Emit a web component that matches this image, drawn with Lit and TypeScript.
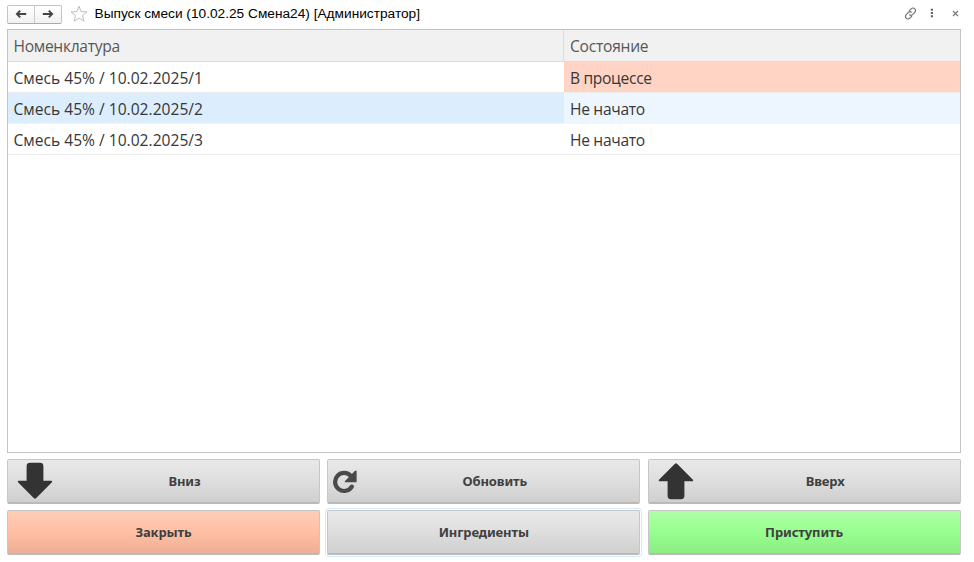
import { LitElement, html, css, svg, nothing } from "lit";
import { customElement, property } from "lit/decorators.js";
import { classMap } from "lit/directives/class-map.js";

const icons: Record<string, unknown> = {
  down: svg`<svg width="36" height="38" viewBox="0 0 36 38"><path fill="#333" d="M13 .8h10a3.4 3.4 0 0 1 3.4 3.4v14.6h8.1q1.4.3.4 1.5L19.3 36.1q-1.3 1.2-2.6 0L1 20.3q-.9-1.2.5-1.5h8.1V4.2A3.4 3.4 0 0 1 13 .8z"/></svg>`,
  up: svg`<svg width="36" height="38" viewBox="0 0 36 38"><path fill="#333" d="M13 37.2h10a3.4 3.4 0 0 0 3.4-3.4V19.2h8.1q1.4-.3.4-1.5L19.3 1.9q-1.3-1.2-2.6 0L1 17.7q-.9 1.2.5 1.5h8.1v14.6a3.4 3.4 0 0 0 3.4 3.4z"/></svg>`,
  refresh: svg`<svg width="24" height="24" viewBox="0 0 24 24"><path fill="none" stroke="#4a4a4a" stroke-width="4.2" stroke-linecap="round" d="M18.8 16.6A9 9 0 1 1 18 6.2"/><path fill="#4a4a4a" d="M23.6.8v11.4H11.8v-1L22 .8z"/></svg>`,
};

@customElement("form-button")
class FormButton extends LitElement {
  @property() label = "";
  @property() tone = "gray";
  @property() icon = "";
  @property({ type: Boolean }) focused = false;

  static styles = css`
    :host { display: block; min-width: 0; }
    button {
      display: flex; align-items: center; box-sizing: border-box;
      width: 100%; height: 45px; padding: 0; margin: 0;
      border: 1px solid #c6c6c6; border-bottom: 2px solid #bababa; border-radius: 2px;
      background: linear-gradient(#e9e9e9, #dedede 50%, #cfcfcf);
      color: #404040; font: bold 13px "Noto Sans", "Open Sans", sans-serif;
      letter-spacing: -.12px;
    }
    .salmon { background: linear-gradient(#ffcdb8, #ffbea3 55%, #ecae96); }
    .green { background: linear-gradient(#afffa7, #98ff8f 50%, #8bec83); }
    .focused { box-shadow: 0 0 0 1px #fff, 0 0 0 2px #d4eafa; }
    .label { flex: 1; text-align: center; }
    .icon { display: flex; flex: none; }
    .large { padding-left: 9px; margin-right: -3px; }
    .small { padding-left: 5px; margin-right: -7px; padding-top: 1px; }
    svg { display: block; }
  `;

  render() {
    const small = this.icon === "refresh";
    return html`<button class=${classMap({ [this.tone]: true, focused: this.focused })}>
      ${this.icon
        ? html`<span class=${classMap({ icon: true, small, large: !small })}>${icons[this.icon]}</span>`
        : nothing}
      <span class="label">${this.label}</span>
    </button>`;
  }
}

@customElement("app-root")
class AppRoot extends LitElement {
  static styles = css`
    :host {
      display: flex; flex-direction: column; box-sizing: border-box;
      width: 974px; height: 562px; padding: 0 13px 0 7px; background: #fff;
      font-family: "Open Sans", "Noto Sans", sans-serif; overflow: hidden;
    }
    svg { display: block; }
    .bar { display: flex; align-items: center; height: 29px; flex: none; }
    .nav {
      display: flex; box-sizing: border-box; width: 55px; height: 19px; margin-top: -1px;
      border: 1px solid #c4c4c4; border-bottom-color: #aaa; border-radius: 2px;
      background: linear-gradient(#fff, #f1f1f1);
    }
    .nav span { flex: 1; display: flex; align-items: center; justify-content: center; }
    .nav span + span { border-left: 1px solid #ccc; }
    .star { margin: -1px 0 0 8px; }
    .title {
      flex: 1; margin-left: 6.5px; margin-top: -3px; white-space: nowrap;
      font: 13.7px "Liberation Sans", sans-serif; color: #000;
    }
    .tools { display: flex; align-items: center; margin-top: -3px; }
    .dots { margin-left: 13px; }
    .close { margin: 1px 2px 0 18.5px; }
    .table {
      display: flex; flex-direction: column; box-sizing: border-box; height: 424px; flex: none;
      border: 1px solid #c2c5c5; background: #fff;
    }
    .row {
      display: grid; grid-template-columns: 556px 1fr; box-sizing: border-box;
      height: 31px; border-bottom: 1px solid #ececec; color: #373737;
      font-size: 15.6px; line-height: 33px;
    }
    .row > div { height: 30px; padding-left: 6px; white-space: nowrap; }
    .row > div:first-child { padding-left: 5.5px; }
    .row > div + div { letter-spacing: -.32px; }
    .row.head { height: 32px; background: #f1f1f1; color: #575757; border-bottom-color: #dcdcdc; }
    .row.head > div { height: 31px; }
    .row.head > div:first-child { letter-spacing: -.3px; }
    .row.head > div + div { border-left: 1px solid #dcdcdc; margin-left: -1px; letter-spacing: -.25px; }
    .busy { background: #ffd4c4; }
    .selected { background: #dceefd; border-bottom-color: #f4f4f4; }
    .selected > div + div { background: #edf6fe; }
    .buttons { display: grid; grid-template-columns: 313px 313px 313px; gap: 6px 7.3px; margin-top: 6px; }
  `;

  rows = [
    ["Смесь 45% / 10.02.2025/1", "В процессе"],
    ["Смесь 45% / 10.02.2025/2", "Не начато"],
    ["Смесь 45% / 10.02.2025/3", "Не начато"],
  ];

  render() {
    return html`
      <div class="bar">
        <div class="nav">
          <span><svg width="12" height="10" viewBox="0 0 12 10"><path d="M11.2 5H2M5.2 1.7 1.9 5l3.3 3.3" fill="none" stroke="#444" stroke-width="1.9"/></svg></span>
          <span><svg width="12" height="10" viewBox="0 0 12 10"><path d="M.8 5H10M6.8 1.7 10.1 5 6.8 8.3" fill="none" stroke="#444" stroke-width="1.9"/></svg></span>
        </div>
        <svg class="star" width="18" height="18" viewBox="0 0 18 18"><path d="M9 1.2l2.1 5.4 5.9.3-4.6 3.6 1.6 5.7L9 13l-5 3.2 1.6-5.7L1 6.9l5.9-.3z" fill="#fff" stroke="#b3b8bd" stroke-width=".9"/></svg>
        <div class="title">Выпуск смеси (10.02.25 Смена24) [Администратор]</div>
        <div class="tools">
          <svg width="13" height="13" viewBox="0 0 13 13"><g fill="none" stroke="#707070" stroke-width="1.15" stroke-linecap="round"><path d="M5.3 3.7l1.9-1.9a2.5 2.5 0 0 1 3.6 0 2.5 2.5 0 0 1 0 3.6L8.6 7.6a2.4 2.4 0 0 1-3 .2"/><path d="M7.7 9.3l-1.9 1.9a2.5 2.5 0 0 1-3.6 0 2.5 2.5 0 0 1 0-3.6l2.2-2.2a2.4 2.4 0 0 1 3-.2"/></g></svg>
          <svg class="dots" width="4" height="10" viewBox="0 0 4 10"><path d="M.8.8h2.2v2H.8zM.8 4h2.2v2H.8zM.8 7.2h2.2v2H.8z" fill="#666"/></svg>
          <svg class="close" width="7" height="7" viewBox="0 0 7 7"><path d="M1 1l5 5M6 1L1 6" stroke="#777" stroke-width="1.2"/></svg>
        </div>
      </div>
      <div class="table">
        <div class="row head"><div>Номенклатура</div><div>Состояние</div></div>
        ${this.rows.map(
          ([name, state], i) => html`<div class=${classMap({ row: true, selected: i === 1 })}>
            <div>${name}</div><div class=${classMap({ busy: i === 0 })}>${state}</div>
          </div>`
        )}
      </div>
      <div class="buttons">
        <form-button label="Вниз" icon="down"></form-button>
        <form-button label="Обновить" icon="refresh"></form-button>
        <form-button label="Вверх" icon="up"></form-button>
        <form-button label="Закрыть" tone="salmon"></form-button>
        <form-button label="Ингредиенты" focused></form-button>
        <form-button label="Приступить" tone="green"></form-button>
      </div>
    `;
  }
}
